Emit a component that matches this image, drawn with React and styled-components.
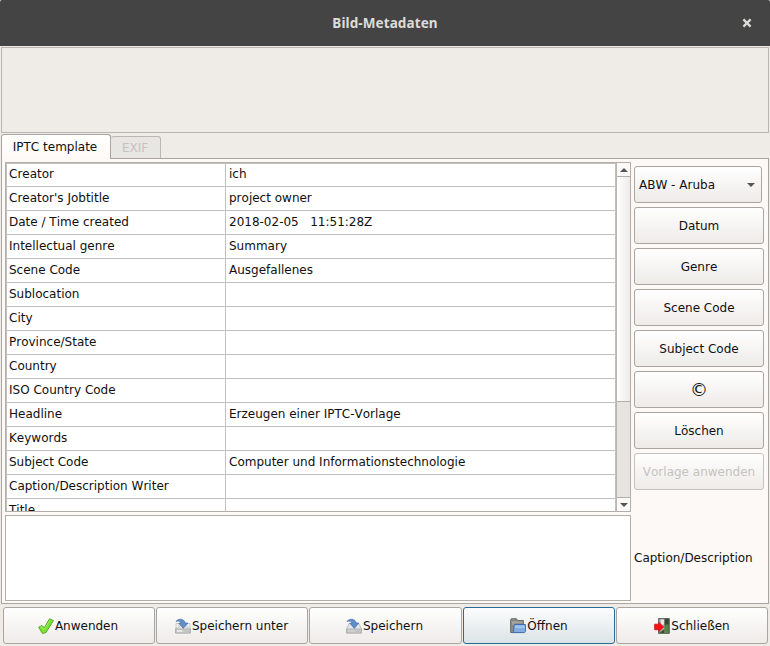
import React from "react";
import styled, { createGlobalStyle } from "styled-components";

const Global = createGlobalStyle`
  * { box-sizing: border-box; }
  body { margin: 0; background: #efebe7; font: 12px/16px "DejaVu Sans", sans-serif; font-kerning: none; color: #101010; overflow: hidden; }
`;
const Window = styled.div`
  width: 770px; height: 646px; display: flex; flex-direction: column; background: #efebe7;
`;
const TitleBar = styled.header`
  height: 46px; flex: none; display: grid; grid-template-columns: 46px 1fr 46px; align-items: center;
  background: #444; color: #dcdcd8; border-radius: 2px 2px 0 0;
`;
const Title = styled.h1`
  grid-column: 2; margin: 0; text-align: center; font: bold 13.5px/18px "Noto Sans", sans-serif; letter-spacing: 0.1px;
`;
const CloseIcon = styled.svg`
  display: block; width: 10px; height: 10px; margin-left: 18px;
`;
const Preview = styled.div`
  height: 86px; flex: none; margin: 1px 1px 0; border: 1px solid #bab5b0;
`;
const TabBar = styled.div`
  display: flex; align-items: flex-end; height: 25px; margin: 1px 0 0 1px; flex: none;
`;
const Tab = styled.div`
  display: flex; align-items: center; justify-content: center;
  width: ${(p) => (p.$active ? 110 : 50)}px;
  height: ${(p) => (p.$active ? 25 : 23)}px;
  padding-right: ${(p) => (p.$active ? 2 : 1)}px;
  color: ${(p) => (p.$active ? "#101010" : "#c4c2c0")};
  background: ${(p) => (p.$active ? "linear-gradient(#fff, #fdf9f6)" : "#e8e6e3")};
  border: 1px solid ${(p) => (p.$active ? "#aaa5a0" : "#bbb7b3")};
  border-bottom: 0;
  border-left-width: ${(p) => (p.$active ? 1 : 0)}px;
  border-radius: 3px 3px 0 0;
`;
const ActiveTab = styled(Tab)`
  position: relative; z-index: 1;
`;
const Pane = styled.main`
  height: 446px; flex: none; margin: -1px 1px 0; padding: 3px 4px 2px 3px;
  border: 1px solid #aaa5a0; background: #fdf9f6;
  display: grid; grid-template-columns: 626px 130px; grid-template-rows: 350px 86px; gap: 3px;
`;
const TableFrame = styled.section`
  display: flex; height: 350px; border: 1px solid #b4aeaa; overflow: hidden;
`;
const Table = styled.div`
  width: 610px; height: 348px; overflow: hidden; background: #fff;
  border: 1px solid #c4bfbb; border-bottom: 0;
`;
const Row = styled.div`
  display: grid; grid-template-columns: 219px 1fr; height: ${(p) => (p.$first ? 23 : 24)}px;
  border-bottom: 1px solid #c2c0be;
`;
const Cell = styled.div`
  padding: ${(p) => (p.$first ? 2 : 3)}px 0 0 ${(p) => (p.$value ? 3 : 2)}px;
  border-right: ${(p) => (p.$value ? 0 : 1)}px solid #c2c0be;
  white-space: pre; line-height: 16px;
`;
const Scrollbar = styled.div`
  width: 14px; height: 348px; display: flex; flex-direction: column; background: #e7e3e0;
  border-left: 1px solid #bab6b2;
`;
const Arrow = styled.div`
  height: 13px; flex: none; display: grid; place-items: center; background: #fbfaf8;
`;
const Thumb = styled.div`
  height: 226px; flex: none; border: solid #b4aeaa; border-width: 1px 0;
  background: linear-gradient(90deg, #fff, #eeebe8);
`;
const Trough = styled.div`
  flex: 1; border-bottom: 1px solid #b4aeaa;
`;
const SideActions = styled.div`
  display: flex; flex-direction: column; gap: 4px; padding-top: 4px;
`;
const Button = styled.button`
  display: flex; align-items: center; justify-content: ${(p) => (p.$combo ? "space-between" : "center")};
  width: ${(p) => (p.$combo ? "128px" : "auto")};
  padding: ${(p) => (p.$combo ? "0 6px 0 4px" : "0")};
  height: 37px; margin: 0; white-space: nowrap;
  font: ${(p) => (p.$large ? "18px/22px" : "12px/16px")} "DejaVu Sans", sans-serif;
  font-kerning: none;
  color: ${(p) => (p.disabled ? "#c5c2c0" : "#101010")};
  border: 1px solid ${(p) => (p.$focus ? "#2b6b98" : p.disabled ? "#c5c1bd" : "#aaa5a0")};
  border-radius: 3px;
  background: ${(p) => (p.$focus ? "linear-gradient(#fcfdfd, #dbe3e6)" : "linear-gradient(#fff, #eeebe8)")};
`;
const Description = styled.div`
  background: #fff; border: 1px solid #b4aeaa;
`;
const Caption = styled.label`
  align-self: center;
`;
const Footer = styled.footer`
  display: grid; grid-template-columns: 152px 152px 153px 152px 152px; gap: 1px; padding: 3px 0 0 3px;
`;
const FooterButton = styled(Button)`
  padding-right: ${(p) => p.$trim ?? 0}px;
`;
const Icon = styled.svg`
  width: 16px; height: 16px; flex: none; display: block; margin-right: 1px;
`;

const rows = [
  ["Creator", "ich"],
  ["Creator's Jobtitle", "project owner"],
  ["Date / Time created", "2018-02-05   11:51:28Z"],
  ["Intellectual genre", "Summary"],
  ["Scene Code", "Ausgefallenes"],
  ["Sublocation", ""],
  ["City", ""],
  ["Province/State", ""],
  ["Country", ""],
  ["ISO Country Code", ""],
  ["Headline", "Erzeugen einer IPTC-Vorlage"],
  ["Keywords", ""],
  ["Subject Code", "Computer und Informationstechnologie"],
  ["Caption/Description Writer", ""],
  ["Title", ""],
];

const Triangle = ({ up }) => (
  <svg width="8" height="4" viewBox="0 0 8 4" display="block">
    <path d={up ? "M0 4L4 0L8 4Z" : "M0 0H8L4 4Z"} fill="#555" />
  </svg>
);

const CheckIcon = () => (
  <Icon viewBox="0 0 16 16">
    <path d="M.6 9.3L4 7.4L6.2 9.8L11.5.8L15.5 2.6L8 14.5L4.5 15.5Z" fill="#7ce032" stroke="#519d29" strokeWidth=".9" strokeLinejoin="round" />
    <path d="M2 9.5L3.6 8.7L6 11.8L12 2.2" fill="none" stroke="#a5f066" strokeWidth=".8" />
  </Icon>
);

const SaveIcon = ({ dialog }) => (
  <Icon viewBox="0 0 16 16">
    <path d="M3 5.5H13L15.4 11V15H.6V11Z" fill="#e6e6e6" stroke="#b4b4b4" strokeWidth=".8" />
    <path d="M.7 11H15.3V15H.7Z" fill="#cfcfcf" stroke="#a0a0a0" strokeWidth=".7" />
    <path d="M9 13H14" stroke="#aaa" strokeWidth=".6" />
    {dialog && <path d="M1 5.5H4V10H1ZM12 5.5H15V10H12Z" fill="#f0f0f0" stroke="#bcbcbc" strokeWidth=".7" />}
    {dialog && <path d="M2 13H7" stroke="#fff" />}
    <path d="M1 3.5C3 .3 9.2.2 10.2 5H12.8L8.3 10.4L3.8 5.2H6.2C5.5 3.3 3.4 2.5 1 3.5Z" fill="#608fc8" stroke="#4570aa" strokeWidth=".7" />
  </Icon>
);

const FolderIcon = () => (
  <Icon viewBox="0 0 16 16">
    <path d="M.6 14.5V1.5L1.3.7H6.5L7.5 2.5H13.4V12L11 14.5Z" fill="#8b8b88" stroke="#656563" strokeWidth=".9" />
    <path d="M2 4.2H12.5M2 6H5" stroke="#b5b5b2" />
    <path d="M4.1 6.5H15.5V13.5L14.6 14.6H2.7L3.5 13.7Z" fill="#84addf" stroke="#3868a9" strokeWidth=".9" />
    <path d="M5 7.5H14.6V10H4.8" fill="#a2c4eb" />
  </Icon>
);

const DoorIcon = () => (
  <Icon viewBox="0 0 16 16">
    <path d="M4.5.5H15.3V15.4H4.5Z" fill="#344b2c" stroke="#666" />
    <path d="M10 9Q12 5 14.7 7V15H10Z" fill="#568446" />
    <path d="M5 1H10.5V11L5 15Z" fill="#b4b4b4" stroke="#777" strokeWidth=".6" />
    <path d="M7 1.5H10V6L7 7.5Z" fill="#e6e6e6" />
    <path d="M.6 6.2H4.8V4.3L9.7 9L4.8 13.6V11.7H.6Z" fill="#fa1010" stroke="#c91616" strokeWidth=".8" />
  </Icon>
);

export default function App() {
  return (
    <>
      <Global />
      <Window>
        <TitleBar>
          <Title>Bild-Metadaten</Title>
          <CloseIcon viewBox="0 0 10 10">
            <path d="M1.4 1.4L8.6 8.6M8.6 1.4L1.4 8.6" stroke="#dcdcd8" strokeWidth="2.2" />
          </CloseIcon>
        </TitleBar>
        <Preview />
        <TabBar>
          <ActiveTab $active>IPTC template</ActiveTab>
          <Tab>EXIF</Tab>
        </TabBar>
        <Pane>
          <TableFrame>
            <Table>
              {rows.map(([name, value], i) => (
                <Row key={name} $first={i === 0}>
                  <Cell $first={i === 0}>{name}</Cell>
                  <Cell $first={i === 0} $value>{value}</Cell>
                </Row>
              ))}
            </Table>
            <Scrollbar>
              <Arrow><Triangle up /></Arrow>
              <Thumb />
              <Trough />
              <Arrow><Triangle /></Arrow>
            </Scrollbar>
          </TableFrame>
          <SideActions>
            <Button $combo>ABW - Aruba<Triangle /></Button>
            <Button>Datum</Button>
            <Button>Genre</Button>
            <Button>Scene Code</Button>
            <Button>Subject Code</Button>
            <Button $large>©</Button>
            <Button>Löschen</Button>
            <Button disabled>Vorlage anwenden</Button>
          </SideActions>
          <Description />
          <Caption>Caption/Description</Caption>
        </Pane>
        <Footer>
          <FooterButton $trim={2}><CheckIcon />Anwenden</FooterButton>
          <FooterButton $trim={1}><SaveIcon dialog />Speichern unter</FooterButton>
          <FooterButton $trim={2}><SaveIcon />Speichern</FooterButton>
          <FooterButton $focus><FolderIcon />Öffnen</FooterButton>
          <FooterButton><DoorIcon />Schließen</FooterButton>
        </Footer>
      </Window>
    </>
  );
}
